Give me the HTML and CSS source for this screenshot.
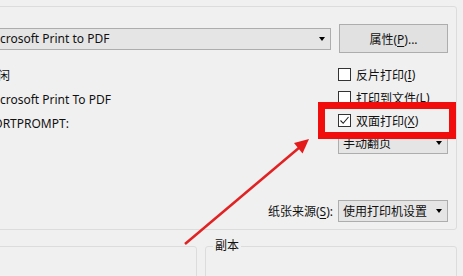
FILE: index.html
```html
<!DOCTYPE html>
<html lang="zh-CN">
<head>
  <meta charset="UTF-8">
  <meta name="viewport" content="width=device-width, initial-scale=1.0">
  <title>打印</title>
  <link rel="stylesheet" href="styles.css">
</head>
<body>

  <div class="dialog">
    <div class="printer-group">
      <div class="printer-row">
        <span class="field-label">名称(<u>N</u>):</span>
        <div class="combo combo-printer">
          <span class="combo-text">Microsoft Print to PDF</span>
          <i class="combo-arrow"></i>
        </div>
        <button class="btn">属性(<u>P</u>)...</button>
      </div>

      <div class="printer-body">
        <div class="info">
          <span class="field-label">状态:</span><span class="info-value">空闲</span>
          <span class="field-label">类型:</span><span class="info-value">Microsoft Print To PDF</span>
          <span class="field-label">位置:</span><span class="info-value">PORTPROMPT:</span>
        </div>

        <div class="options">
          <label class="check"><span class="box"></span>反片打印(<u>I</u>)</label>
          <label class="check"><span class="box"></span>打印到文件(<u>L</u>)</label>
          <label class="check">
            <span class="box">
              <svg width="11" height="11" viewBox="0 0 11 11"><polyline points="1.5,5.5 4.2,8.3 9.5,2" fill="none" stroke="#222" stroke-width="1.1"/></svg>
            </span>双面打印(<u>X</u>)
          </label>
          <div class="combo">
            <span class="combo-text">手动翻页</span>
            <i class="combo-arrow"></i>
          </div>
        </div>
      </div>

      <div class="source-row">
        <span>纸张来源(<u>S</u>):</span>
        <div class="combo combo-source">
          <span class="combo-text">使用打印机设置</span>
          <i class="combo-arrow"></i>
        </div>
      </div>
    </div>

    <div class="bottom-row">
      <fieldset class="group group-range"><legend>页面范围</legend></fieldset>
      <fieldset class="group group-copies"><legend>副本</legend></fieldset>
    </div>
  </div>

  <!-- annotation -->
  <div class="highlight"></div>
  <svg class="pointer" width="463" height="276" viewBox="0 0 463 276">
    <line x1="185" y1="244" x2="300" y2="147" stroke="#e22222" stroke-width="2.5"/>
    <polygon points="309,139 294,143 302.5,153.5" fill="#e41b1b"/>
  </svg>

</body>
</html>
```

FILE: styles.css
```css
body {
  margin: 0;
  width: 463px;
  height: 276px;
  overflow: hidden;
  background: #f0f0f0;
  font-family: "Noto Sans", "Noto Sans CJK SC", sans-serif;
  font-size: 12px;
  color: #111;
}

u {
  text-decoration-thickness: 1px;
  text-underline-offset: 2px;
}

.dialog {
  margin-left: -80px;
  width: 537px;
}

.printer-group {
  margin-top: 6px;
  border: 1px solid #dcdcdc;
  border-radius: 3px;
  padding: 17px 8px 7px 14px;
}

.printer-row {
  display: flex;
  align-items: center;
  height: 29px;
}

.field-label {
  width: 48px;
  flex-shrink: 0;
}

.combo {
  display: flex;
  align-items: center;
  justify-content: space-between;
  box-sizing: border-box;
  height: 22px;
  padding: 0 5px 0 4px;
  background: #e5e5e5;
  border: 1px solid #adadad;
}

.combo-printer {
  flex: 1;
  padding-left: 2px;
  margin-right: 8px;
}

.combo-arrow {
  width: 0;
  height: 0;
  border-left: 3.5px solid transparent;
  border-right: 3.5px solid transparent;
  border-top: 4px solid #000;
}

.btn {
  width: 109px;
  height: 29px;
  padding: 0;
  background: #e1e1e1;
  border: 1px solid #adadad;
  font: inherit;
  color: inherit;
}

.printer-body {
  display: flex;
  justify-content: space-between;
  margin-top: 10px;
}

.info {
  display: grid;
  grid-template-columns: 48px auto;
  grid-auto-rows: 24px;
  align-items: center;
  align-self: flex-start;
}

.info-value {
  padding-left: 3px;
}

.options {
  width: 110px;
  display: flex;
  flex-direction: column;
}

.check {
  display: flex;
  align-items: center;
  height: 23px;
}

.box {
  display: flex;
  align-items: center;
  justify-content: center;
  box-sizing: border-box;
  width: 13px;
  height: 13px;
  margin-right: 5px;
  background: #fff;
  border: 1px solid #333;
}

.source-row {
  display: flex;
  justify-content: flex-end;
  align-items: center;
  gap: 5px;
  margin-top: 46px;
}

.combo-source {
  width: 110px;
}

.bottom-row {
  display: flex;
  gap: 8px;
  margin-top: 8px;
}

.group {
  margin: 0;
  padding: 0 7px;
  height: 60px;
  border: 1px solid #dcdcdc;
  border-radius: 3px;
  min-inline-size: 0;
}

.group legend {
  padding: 0 2px;
  line-height: 16px;
}

.group-range {
  flex: 1;
}

.group-copies {
  width: 252px;
  box-sizing: border-box;
}

.highlight {
  position: absolute;
  left: 318px;
  top: 102px;
  width: 138px;
  height: 37px;
  box-sizing: border-box;
  border: 7px solid #f20d0d;
}

.pointer {
  position: absolute;
  left: 0;
  top: 0;
}
```
